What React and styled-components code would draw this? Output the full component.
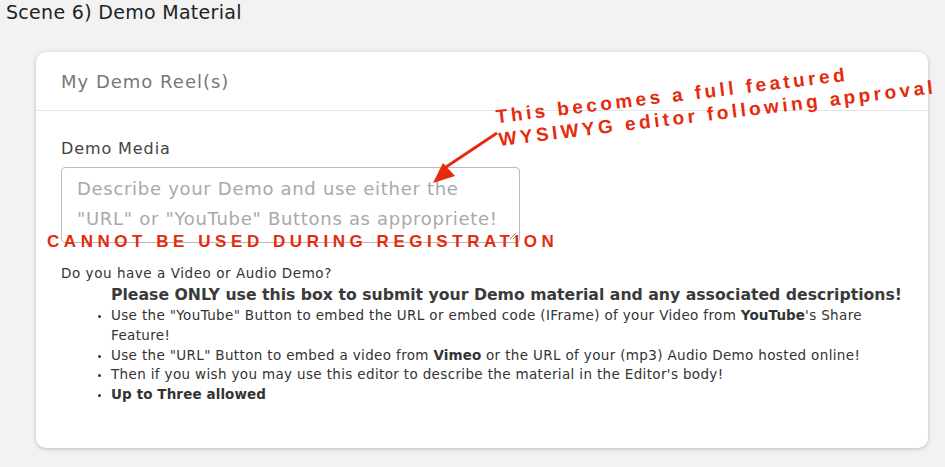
import styled, { createGlobalStyle } from "styled-components";

const Global = createGlobalStyle`
  html, body {
    margin: 0;
    padding: 0;
    background: #f2f2f2;
    font-family: "DejaVu Sans", "Open Sans", sans-serif;
  }
`;

const Page = styled.div`
  width: 945px;
  height: 467px;
  overflow: hidden;
  position: relative;
`;

const SceneTitle = styled.h2`
  margin: 0;
  padding: 0 0 0 6px;
  font-size: 19px;
  font-weight: 400;
  color: #222;
  line-height: 25px;
  letter-spacing: 0.3px;
`;

const Card = styled.section`
  margin: 27px 17px 0 36px;
  height: 396px;
  background: #fff;
  border-radius: 10px;
  box-shadow: 0 1px 4px rgba(0, 0, 0, 0.22);
  position: relative;
`;

const CardHeader = styled.div`
  height: 58px;
  border-bottom: 1px solid #e4e4e4;
  padding: 0 25px;
  display: flex;
  align-items: center;
  font-size: 18px;
  color: #777;
  letter-spacing: 1px;
`;

const CardBody = styled.div`
  padding: 28px 25px 0 25px;
  position: relative;
`;

const Label = styled.div`
  font-size: 16px;
  color: #444;
  line-height: 20px;
  letter-spacing: 0.9px;
`;

const TextBox = styled.div`
  margin-top: 8px;
  width: 459px;
  height: 76px;
  box-sizing: border-box;
  border: 1px solid #bbb;
  border-radius: 4px;
  padding: 6px 15px;
  font-size: 18px;
  line-height: 30px;
  color: #a9a9a9;
  letter-spacing: 0.7px;
  position: relative;
  white-space: nowrap;
`;

const Grip = styled.svg`
  position: absolute;
  right: 2px;
  bottom: 2px;
`;

const Hint = styled.div`
  margin-top: 21px;
  font-size: 13.5px;
  color: #333;
  line-height: 18px;
  letter-spacing: 0.55px;
`;

const Notice = styled.div`
  margin: 3px 0 0 50px;
  font-size: 15.7px;
  font-weight: 700;
  color: #3a3a3a;
  line-height: 20px;
  white-space: nowrap;
`;

const Bullets = styled.ul`
  margin: 1px 0 0 0;
  padding-left: 50px;
  font-size: 13.5px;
  color: #333;
  line-height: 19.75px;
  letter-spacing: 0.35px;

  li::marker {
    font-size: 10px;
  }

  b {
    font-weight: 700;
    letter-spacing: 0.1px;
  }
`;

const Stamp = styled.div`
  position: absolute;
  left: 11px;
  top: 180px;
  font-family: "Liberation Sans", Arial, sans-serif;
  font-weight: 700;
  font-size: 17px;
  letter-spacing: 4.55px;
  color: #e52b0e;
  white-space: nowrap;
`;

const Callout = styled.div`
  position: absolute;
  left: 464px;
  top: 53px;
  font-family: "Liberation Sans", Arial, sans-serif;
  font-weight: 700;
  font-size: 19px;
  line-height: 23px;
  letter-spacing: 3.5px;
  color: #e52b0e;
  white-space: nowrap;
  transform: rotate(-6.9deg);
  transform-origin: left bottom;
`;

const Arrow = styled.svg`
  position: absolute;
  left: 0;
  top: 0;
  pointer-events: none;
`;

export default function App() {
  return (
    <Page>
      <Global />
      <SceneTitle>Scene 6) Demo Material</SceneTitle>
      <Card>
        <CardHeader>My Demo Reel(s)</CardHeader>
        <CardBody>
          <Label>Demo Media</Label>
          <TextBox>
            Describe your Demo and use either the
            <br />
            "URL" or "YouTube" Buttons as appropriete!
            <Grip width="8" height="8" viewBox="0 0 8 8">
              <path d="M7 1 L1 7 M7 4 L4 7" stroke="#888" strokeWidth="1" />
            </Grip>
          </TextBox>
          <Hint>Do you have a Video or Audio Demo?</Hint>
          <Notice>
            Please ONLY use this box to submit your Demo material and any associated descriptions!
          </Notice>
          <Bullets>
            <li>
              Use the "YouTube" Button to embed the URL or embed code (IFrame) of your Video from{" "}
              <b>YouTube</b>'s Share Feature!
            </li>
            <li>
              Use the "URL" Button to embed a video from <b>Vimeo</b> or the URL of your (mp3) Audio
              Demo hosted online!
            </li>
            <li>Then if you wish you may use this editor to describe the material in the Editor's body!</li>
            <li>
              <b>Up to Three allowed</b>
            </li>
          </Bullets>
        </CardBody>
        <Stamp>CANNOT BE USED DURING REGISTRATION</Stamp>
        <Callout>
          This becomes a full featured
          <br />
          WYSIWYG editor following approval
        </Callout>
        <Arrow width="892" height="396" viewBox="0 0 892 396">
          <line x1="461" y1="81" x2="404" y2="119" stroke="#e52b0e" strokeWidth="3" />
          <polygon points="397,131 407,111 419,124" fill="#e52b0e" />
        </Arrow>
      </Card>
    </Page>
  );
}
